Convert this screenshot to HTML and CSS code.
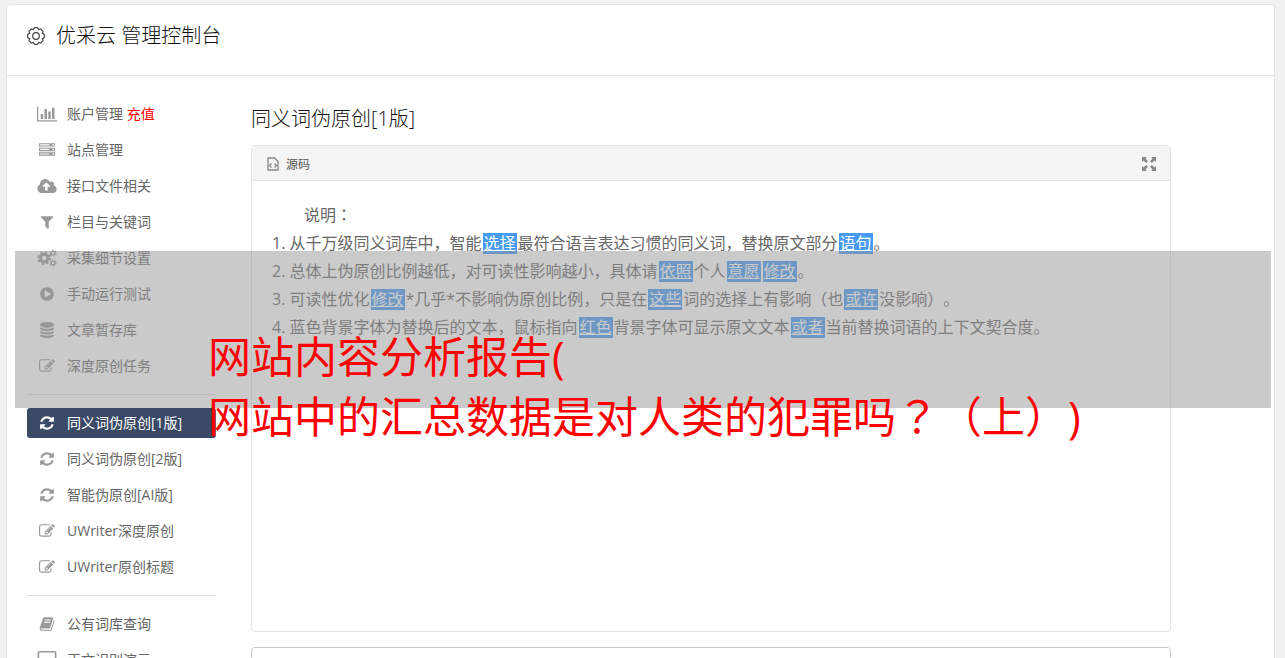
FILE: index.html
```html
<!DOCTYPE html>
<html lang="zh-CN">
<head>
    <meta charset="UTF-8">
    <meta name="viewport" content="width=device-width, initial-scale=1.0">
    <title>优采云 管理控制台</title>
    <link rel="stylesheet" href="styles.css">
</head>
<body>
    <svg class="sprite" aria-hidden="true">
        <symbol id="i-chart" viewBox="0 0 2048 1792"><path d="M640 896v512h-256v-512h256zm384-512v1024h-256v-1024h256zm1024 1152v128h-2048v-1536h128v1408h1920zm-640-896v768h-256v-768h256zm384-384v1152h-256v-1152h256z"/></symbol>
        <symbol id="i-server" viewBox="0 0 1792 1792"><path d="M128 1408h1024v-128h-1024v128zm0-512h1024v-128h-1024v128zm1568 448q0-40-28-68t-68-28-68 28-28 68 28 68 68 28 68-28 28-68zm-1568-960h1024v-128h-1024v128zm1568 448q0-40-28-68t-68-28-68 28-28 68 28 68 68 28 68-28 28-68zm0-512q0-40-28-68t-68-28-68 28-28 68 28 68 68 28 68-28 28-68zm96 832v384h-1792v-384h1792zm0-512v384h-1792v-384h1792zm0-512v384h-1792v-384h1792z"/></symbol>
        <symbol id="i-cloud" viewBox="0 0 1920 1792"><path d="M1280 928q0-14-9-23l-352-352q-9-9-23-9t-23 9l-351 351q-10 12-10 24 0 14 9 23t23 9h224v352q0 13 9.5 22.5t22.5 9.5h192q13 0 22.5-9.5t9.5-22.5v-352h224q13 0 22.5-9.5t9.5-22.5zm640 288q0 159-112.5 271.5t-271.5 112.5h-1088q-185 0-316.5-131.5t-131.5-316.5q0-130 70-240t188-165q-2-30-2-43 0-212 150-362t362-150q156 0 285.5 87t188.5 231q71-62 166-62 106 0 181 75t75 181q0 76-41 138 130 31 213.5 135.5t83.5 238.5z"/></symbol>
        <symbol id="i-filter" viewBox="0 0 1792 1792"><path d="M1595 295q17 41-14 70l-493 493v742q0 42-39 59-13 5-25 5-27 0-45-19l-256-256q-19-19-19-45v-486l-493-493q-31-29-14-70 17-39 59-39h1280q42 0 59 39z"/></symbol>
        <symbol id="i-cogs" viewBox="0 0 18 16">
            <g fill="none" stroke="currentColor">
                <circle cx="6.500" cy="8" r="3.400" stroke-width="2.600"/>
                <circle cx="6.500" cy="8" r="5.300" stroke-width="1.800" stroke-dasharray="2.200 1.963"/>
                <circle cx="14.500" cy="3.500" r="1.700" stroke-width="1.200"/>
                <circle cx="14.500" cy="3.500" r="2.700" stroke-width="1" stroke-dasharray="1.400 1.427"/>
                <circle cx="14.500" cy="12.500" r="1.700" stroke-width="1.200"/>
                <circle cx="14.500" cy="12.500" r="2.700" stroke-width="1" stroke-dasharray="1.400 1.427"/>
            </g>
        </symbol>
        <symbol id="i-play" viewBox="0 0 1792 1792"><path d="M896 128q209 0 385.500 103t279.500 279.500 103 385.500-103 385.500-279.500 279.500-385.500 103-385.500-103-279.500-279.500-103-385.500 103-385.500 279.500-279.500 385.500-103zm384 823q32-18 32-55t-32-55l-544-320q-31-19-64-1-32 19-32 56v640q0 37 32 56 16 8 32 8 17 0 32-9z"/></symbol>
        <symbol id="i-database" viewBox="0 0 1792 1792"><path d="M896 768q237 0 443-43t325-127v170q0 69-103 128t-280 93.500-385 34.500-385-34.500-280-93.500-103-128v-170q119 84 325 127t443 43zm0 768q237 0 443-43t325-127v170q0 69-103 128t-280 93.500-385 34.500-385-34.500-280-93.500-103-128v-170q119 84 325 127t443 43zm0-384q237 0 443-43t325-127v170q0 69-103 128t-280 93.500-385 34.500-385-34.500-280-93.500-103-128v-170q119 84 325 127t443 43zm0-1152q208 0 385 34.500t280 93.500 103 128v128q0 69-103 128t-280 93.500-385 34.500-385-34.500-280-93.500-103-128v-128q0-69 103-128t280-93.500 385-34.500z"/></symbol>
        <symbol id="i-edit" viewBox="0 0 1792 1792"><path d="M888 1184l116-116-152-152-116 116v56h96v96h56zm440-720q-16-16-33 1l-350 350q-17 17-1 33t33-1l350-350q17-17 1-33zm80 594v190q0 119-84.500 203.500t-203.500 84.500h-832q-119 0-203.500-84.500t-84.500-203.500v-832q0-119 84.500-203.500t203.500-84.500h832q63 0 117 25 15 7 18 23 3 17-9 29l-49 49q-14 14-32 8-23-6-45-6h-832q-66 0-113 47t-47 113v832q0 66 47 113t113 47h832q66 0 113-47t47-113v-126q0-13 9-22l64-64q15-15 35-7t20 29zm-96-738l288 288-672 672h-288v-288zm444 132l-92 92-288-288 92-92q28-28 68-28t68 28l152 152q28 28 28 68t-28 68z"/></symbol>
        <symbol id="i-refresh" viewBox="0 0 1792 1792"><path d="M1639 1056q0 5-1 7-64 268-268 434.500t-478 166.500q-146 0-282.500-55t-243.500-157l-129 129q-19 19-45 19t-45-19-19-45v-448q0-26 19-45t45-19h448q26 0 45 19t19 45-19 45l-137 137q71 66 161 102t187 36q134 0 250-65t186-179q11-17 53-117 8-23 30-23h192q13 0 22.500 9.500t9.500 22.500zm25-800v448q0 26-19 45t-45 19h-448q-26 0-45-19t-19-45 19-45l138-138q-148-137-349-137-134 0-250 65t-186 179q-11 17-53 117-8 23-30 23h-199q-13 0-22.500-9.500t-9.500-22.500v-7q65-268 270-434.500t480-166.500q146 0 284 55.500t245 156.500l130-129q19-19 45-19t45 19 19 45z"/></symbol>
        <symbol id="i-book" viewBox="0 0 1792 1792"><path d="M1703 478q40 57 18 129l-275 906q-19 64-76.500 107.500t-122.500 43.500h-923q-77 0-148.500-53.500t-99.500-131.500q-24-67-2-127 0-4 3-27t4-37q1-8-3-21.500t-3-19.500q2-11 8-21t16.500-23.500 16.500-23.500q23-38 45-91.500t30-91.500q3-10 .5-30t-.5-28q3-11 17-28t17-23q21-36 42-92t25-90q1-9-2.500-32t.5-28q4-13 22-30.500t22-22.500q19-26 42.500-84.500t27.500-96.500q1-8-3-25.500t-2-26.500q2-8 9-18t18-23 17-21q8-12 16.500-30.500t15-35 16-36 19.500-32 26.500-23.500 36-11.500 47.500 5.500l-1 3q38-9 51-9h761q74 0 114 56t18 130l-274 906q-36 119-71.500 153.500t-128.500 34.500h-869q-27 0-38 15-11 16-1 43 24 70 144 70h923q29 0 56-15.500t35-41.500l300-987q7-22 5-57 38 15 59 43zm-1064 2q-4 13 2 22.500t20 9.500h608q13 0 25.500-9.500t16.500-22.500l21-64q4-13-2-22.500t-20-9.500h-608q-13 0-25.500 9.500t-16.500 22.500zm-83 256q-4 13 2 22.500t20 9.500h608q13 0 25.500-9.500t16.500-22.500l21-64q4-13-2-22.500t-20-9.500h-608q-13 0-25.500 9.500t-16.500 22.500z"/></symbol>
        <symbol id="i-laptop" viewBox="0 0 18 16"><path fill-rule="evenodd" d="M2 0h14a1.500 1.500 0 0 1 1.500 1.500v9a1.500 1.500 0 0 1-1.500 1.500H2a1.500 1.500 0 0 1-1.500-1.500v-9A1.500 1.500 0 0 1 2 0zm0 1.200v9.500h14V1.200zM0 13h18v1.500H0z"/></symbol>
    </svg>

    <div class="panel">
        <header class="panel-header">
            <svg class="gear" viewBox="0 0 18 18"><path d="M17.300 7.300V10.700L15.400 11.600L16.050 13.600L13.600 16.050L11.600 15.400L10.700 17.300H7.300L6.400 15.400L4.400 16.050L1.950 13.600L2.600 11.600L.7 10.700V7.300L2.600 6.400L1.950 4.400L4.400 1.950L6.400 2.600L7.300 .7H10.700L11.600 2.600L13.600 1.950L16.050 4.400L15.400 6.400Z"/><circle cx="9" cy="9" r="3.300"/></svg>
            <h1>优采云 管理控制台</h1>
        </header>

        <div class="panel-body">
            <nav class="sidebar">
                <a href="#"><svg class="icon wide"><use href="#i-chart"/></svg><span>账户管理 <em>充值</em></span></a>
                <a href="#"><svg class="icon"><use href="#i-server"/></svg><span>站点管理</span></a>
                <a href="#"><svg class="icon wide"><use href="#i-cloud"/></svg><span>接口文件相关</span></a>
                <a href="#"><svg class="icon"><use href="#i-filter"/></svg><span>栏目与关键词</span></a>
                <a href="#"><svg class="icon wide"><use href="#i-cogs"/></svg><span>采集细节设置</span></a>
                <a href="#"><svg class="icon"><use href="#i-play"/></svg><span>手动运行测试</span></a>
                <a href="#"><svg class="icon"><use href="#i-database"/></svg><span>文章暂存库</span></a>
                <a href="#"><svg class="icon"><use href="#i-edit"/></svg><span>深度原创任务</span></a>
                <hr>
                <a href="#" class="active"><svg class="icon"><use href="#i-refresh"/></svg><span>同义词伪原创[1版]</span></a>
                <a href="#"><svg class="icon"><use href="#i-refresh"/></svg><span>同义词伪原创[2版]</span></a>
                <a href="#"><svg class="icon"><use href="#i-refresh"/></svg><span>智能伪原创[AI版]</span></a>
                <a href="#"><svg class="icon"><use href="#i-edit"/></svg><span>UWriter深度原创</span></a>
                <a href="#"><svg class="icon"><use href="#i-edit"/></svg><span>UWriter原创标题</span></a>
                <hr>
                <a href="#"><svg class="icon"><use href="#i-book"/></svg><span>公有词库查询</span></a>
                <a href="#"><svg class="icon wide"><use href="#i-laptop"/></svg><span>正文识别演示</span></a>
            </nav>

            <main class="content">
                <h2>同义词伪原创[1版]</h2>
                <section class="editor">
                    <div class="toolbar">
                        <button type="button">
                            <svg class="source" viewBox="0 0 12 14"><path d="M1 1H7.500L11 4.500V13H1Z"/><path d="M4.500 6.500L2.500 8.500L4.500 10.500M7.500 6.500L9.500 8.500L7.500 10.500"/></svg>源码
                        </button>
                        <button type="button" aria-label="全屏">
                            <svg class="expand" viewBox="0 0 14 14"><path d="M0 0H5L3.500 1.500L6 4.200L4.200 6L1.500 3.500L0 5ZM14 0V5L12.500 3.500L9.800 6L8 4.200L10.500 1.500L9 0ZM0 14V9L1.500 10.500L4.200 8L6 9.800L3.500 12.500L5 14ZM14 14H9L10.500 12.500L8 9.800L9.800 8L12.500 10.500L14 9Z"/></svg>
                        </button>
                    </div>
                    <div class="editor-body">
                        <p class="lead">说明<span class="centered" lang="ja">：</span></p>
                        <p>1. 从千万级同义词库中，智能<mark>选择</mark>最符合语言表达习惯的同义词，替换原文部分<mark>语句</mark>。</p>
                        <p>2. 总体上伪原创比例越低，对可读性影响越小，具体请<mark>依照</mark>个人<mark>意愿</mark><mark>修改</mark>。</p>
                        <p>3. 可读性优化<mark>修改</mark>*几乎*不影响伪原创比例，只是在<mark>这些</mark>词的选择上有影响（也<mark>或许</mark>没影响）。</p>
                        <p>4. 蓝色背景字体为替换后的文本，鼠标指向<mark>红色</mark>背景字体可显示原文文本<mark>或者</mark>当前替换词语的上下文契合度。</p>
                    </div>
                </section>
                <textarea class="result" aria-label="结果"></textarea>
            </main>
        </div>
    </div>

    <div class="banner">
        <p>网站内容分析报告(<br>网站中的汇总数据是对人类的犯罪吗<span class="centered" lang="ja">？</span>（上）)</p>
    </div>
</body>
</html>
```

FILE: styles.css
```css
* { box-sizing: border-box; }
body {
    margin: 0;
    height: 100vh;
    overflow: hidden;
    padding: 4px 10px 0 6px;
    background: #f1f1f1;
    color: #666;
    font-family: "Open Sans", "Noto Sans CJK SC", sans-serif;
    font-size: 14px;
    text-spacing-trim: space-all;
}
h1, h2, p { margin: 0; }
h1, h2 { color: #111; font-size: 20px; font-weight: 300; line-height: 30px; }
button { display: flex; align-items: center; padding: 0; border: 0; background: none; color: #555; font: inherit; }
.sprite { display: none; }
.centered { font-family: "Noto Sans CJK JP", sans-serif; line-height: 1; }

.panel { background: #fff; border: 1px solid #e3e3e3; border-radius: 4px; }
.panel-header { display: flex; align-items: center; gap: 11px; height: 71px; padding: 0 20px 8px; border-bottom: 1px solid #e3e3e3; }
.gear { width: 18px; height: 18px; fill: none; stroke: #444; stroke-width: 1.2; stroke-linejoin: round; }
.panel-body { display: flex; gap: 35px; padding: 23px 103px 20px 20px; }

.sidebar { display: flex; flex-direction: column; flex: 0 0 189px; }
.sidebar a { display: flex; align-items: center; gap: 10px; height: 30px; margin-bottom: 6px; padding-left: 10px; border-radius: 3px; color: #666; text-decoration: none; }
.sidebar span { padding-bottom: 2px; }
.sidebar em { color: #f00; font-style: normal; }
.sidebar hr { width: 100%; height: 1px; margin: 7px 0 13px; border: 0; background: #ddd; }
.sidebar .active { background: #3a4a66; color: #fff; }
.icon { width: 20px; height: 16px; flex: none; fill: #999; color: #999; }
.icon.wide { height: 18px; }
.active .icon { fill: #fff; }

.content { flex: 1; min-width: 0; padding-top: 5px; }
.content h2 { margin-bottom: 11px; }
.editor { border: 1px solid #e3e3e3; border-radius: 4px; }
.toolbar { display: flex; justify-content: space-between; height: 35px; padding: 2px 14px 0 15px; border-bottom: 1px solid #e3e3e3; background: #f4f4f4; font-size: 12px; }
.source { width: 12px; height: 14px; margin-right: 7px; fill: none; stroke: #888; stroke-width: 1.3; }
.expand { width: 14px; height: 14px; fill: #888; }
.editor-body { min-height: 450px; padding: 20px; font-size: 16px; line-height: 28px; }
.lead { text-indent: 2em; }
mark { display: inline-block; margin: 0 1px; padding: 0 1px; background: #459bf5; color: #fff; line-height: 21px; text-decoration: underline; }
.result { display: block; width: 100%; height: 120px; margin-top: 15px; border: 1px solid #ccc; border-radius: 4px; resize: none; }

.banner { position: absolute; top: 251px; left: 15px; right: 14px; height: 157px; padding: 76px 0 0 193px; background: rgba(150, 150, 150, 0.5); }
.banner p { color: #f00; font-size: 43px; line-height: 60px; white-space: nowrap; }
```
